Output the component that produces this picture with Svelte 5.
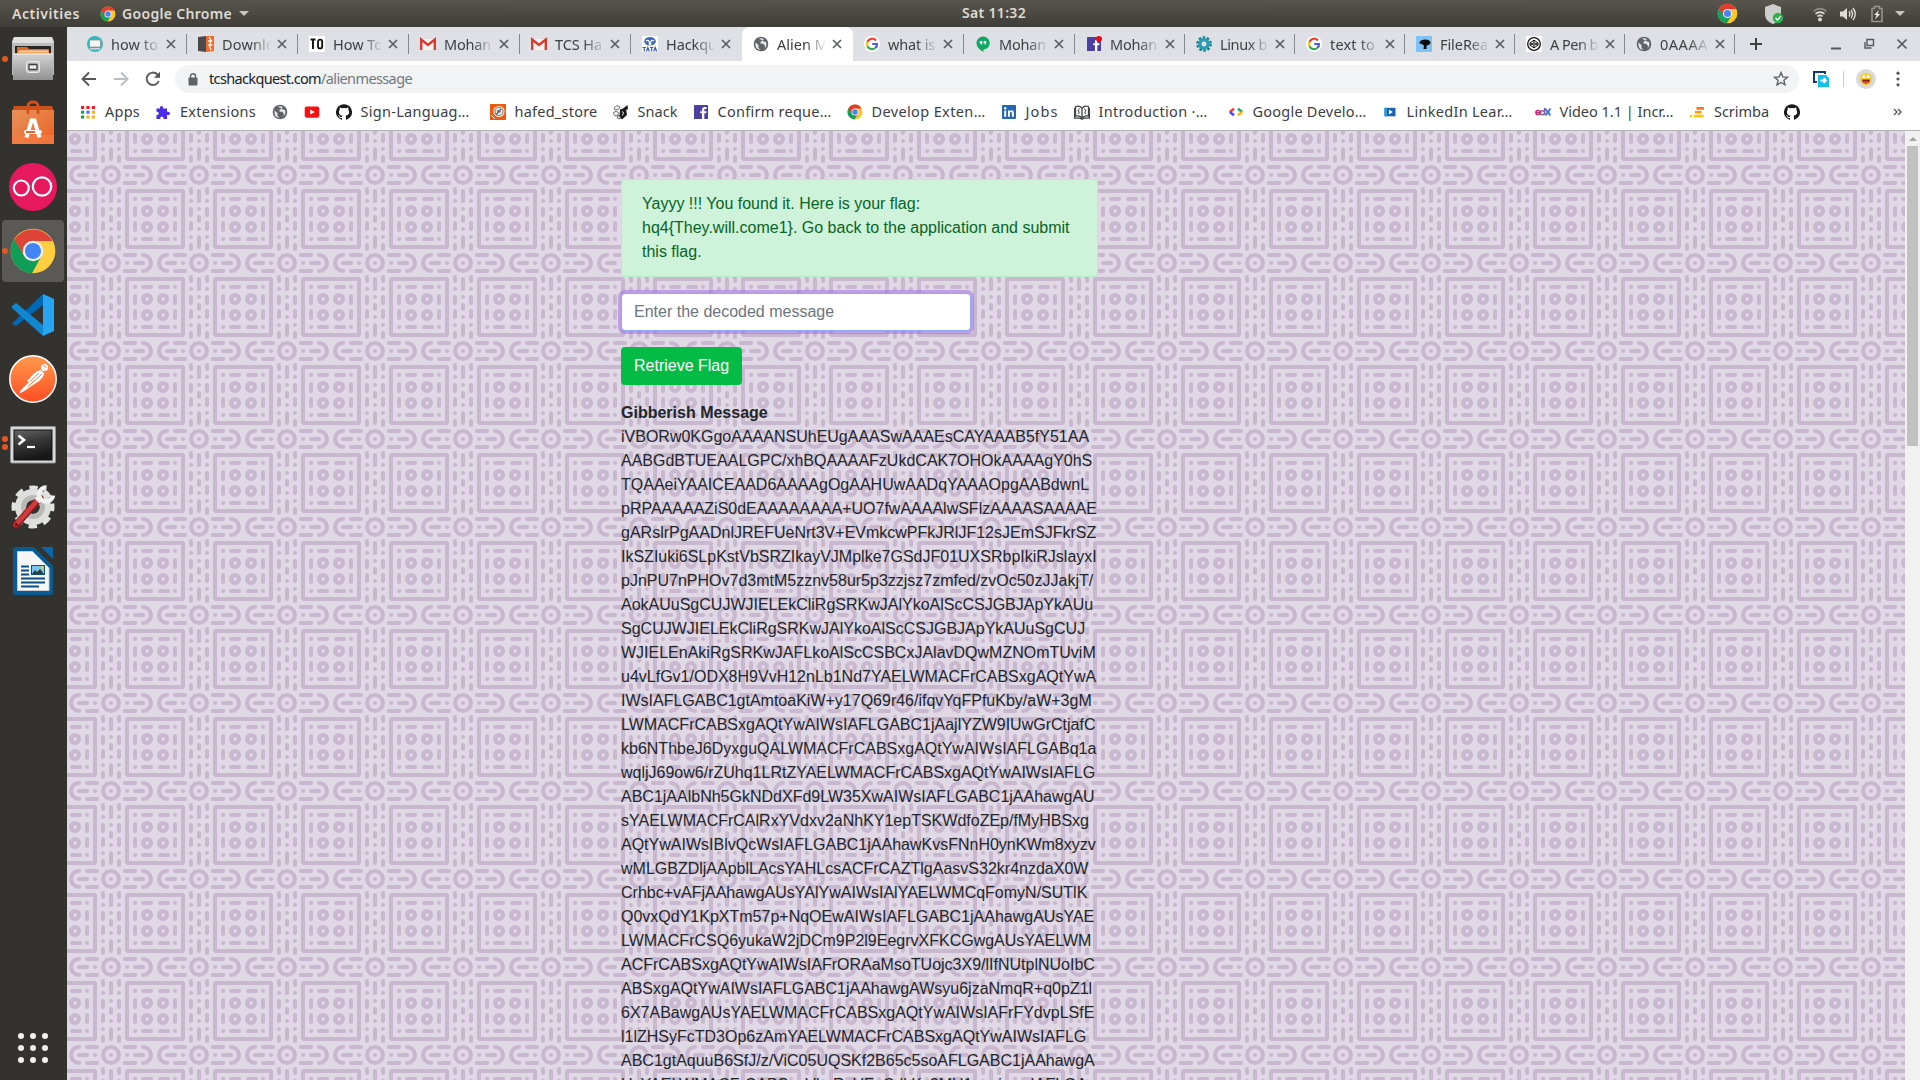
<script>
  const tabs = [
    { icon: 'screen', text: 'how to', w: 47 },
    { icon: 'burp', text: 'Downlo', w: 53 },
    { icon: 'to', text: 'How To', w: 50 },
    { icon: 'gmail', text: 'Mohan', w: 47 },
    { icon: 'gmail', text: 'TCS Ha', w: 47 },
    { icon: 'tata', text: 'Hackqu', w: 51 },
    { icon: 'globe', text: 'Alien M', w: 51, active: true },
    { icon: 'google', text: 'what is', w: 47 },
    { icon: 'hangouts', text: 'Mohan', w: 47 },
    { icon: 'fbdot', text: 'Mohan', w: 47 },
    { icon: 'gear', text: 'Linux b', w: 47 },
    { icon: 'google', text: 'text to', w: 45 },
    { icon: 'bird', text: 'FileRea', w: 48 },
    { icon: 'codepen', text: 'A Pen b', w: 48 },
    { icon: 'globe', text: '0AAAA', w: 48 },
  ];

  // slot: distance to the next bookmark, w: label width
  const bookmarks = [
    { icon: 'apps', text: 'Apps', w: 35, slot: 75 },
    { icon: 'puzzle', text: 'Extensions', w: 76, slot: 116.5 },
    { icon: 'globe', text: '', w: 0, slot: 32 },
    { icon: 'youtube', text: '', w: 0, slot: 32 },
    { icon: 'github', text: 'Sign-Languag…', w: 109, slot: 154 },
    { icon: 'hafed', text: 'hafed_store', w: 83, slot: 123 },
    { icon: 'snack', text: 'Snack', w: 40, slot: 80 },
    { icon: 'fb', text: 'Confirm reque…', w: 114, slot: 154 },
    { icon: 'chrome', text: 'Develop Exten…', w: 114, slot: 154 },
    { icon: 'linkedin', text: 'Jobs', w: 33, slot: 73 },
    { icon: 'book', text: 'Introduction ·…', w: 109, slot: 154 },
    { icon: 'gdev', text: 'Google Develo…', w: 114, slot: 154 },
    { icon: 'lil', text: 'LinkedIn Lear…', w: 106, slot: 153 },
    { icon: 'edx', text: 'Video 1.1 | Incr…', w: 114, slot: 154.5 },
    { icon: 'scrimba', text: 'Scrimba', w: 55, slot: 95 },
    { icon: 'github', text: '', w: 0, slot: 30 },
  ];

  const dock = [
    { icon: 'files', dots: 1 },
    { icon: 'software', dots: 0 },
    { icon: 'oo', dots: 0 },
    { icon: 'chrome', dots: 1, active: true },
    { icon: 'vscode', dots: 0 },
    { icon: 'postman', dots: 0 },
    { icon: 'terminal', dots: 2 },
    { icon: 'settings', dots: 0 },
    { icon: 'writer', dots: 0 },
  ];

  const message = [
    'iVBORw0KGgoAAAANSUhEUgAAASwAAAEsCAYAAAB5fY51AA',
    'AABGdBTUEAALGPC/xhBQAAAAFzUkdCAK7OHOkAAAAgY0hS',
    'TQAAeiYAAICEAAD6AAAAgOgAAHUwAADqYAAAOpgAABdwnL',
    'pRPAAAAAZiS0dEAAAAAAAA+UO7fwAAAAlwSFlzAAAASAAAAE',
    'gARslrPgAADnlJREFUeNrt3V+EVmkcwPFkJRlJF12sJEmSJFkrSZ',
    'IkSZIuki6SLpKstVbSRZIkayVJMplke7GSdJF01UXSRbpIkiRJslayxI',
    'pJnPU7nPHOv7d3mtM5zznv58ur5p3zzjsz7zmfed/zvOc50zJJakjT/',
    'AokAUuSgCUJWJIELEkCliRgSRKwJAlYkoAlScCSJGBJApYkAUu',
    'SgCUJWJIELEkCliRgSRKwJAlYkoAlScCSJGBJApYkAUuSgCUJ',
    'WJIELEnAkiRgSRKwJAFLkoAlScCSBCxJAlavDQwMZNOmTUviM',
    'u4vLfGv1/ODX8H9VvH12nLb1Nd7YAELWMACFrCABSxgAQtYwA',
    'IWsIAFLGABC1gtAmtoaKiW+y17Q69r46/ifqvYqFPfuKby/aW+3gM',
    'LWMACFrCABSxgAQtYwAIWsIAFLGABC1jAajlYZW9IUwGrCtjafC',
    'kb6NThbeJ6DyxguQALWMACFrCABSxgAQtYwAIWsIAFLGABq1a',
    'wqljJ69ow6/rZUhq1LRtZYAELWMACFrCABSxgAQtYwAIWsIAFLG',
    'ABC1jAAlbNh5GkNDdXFd9LW35XwAIWsIAFLGABC1jAAhawgAU',
    'sYAELWMACFrCAlRxYVdxv2aNhKY1epTSKWdfoZEp/fMyHBSxg',
    'AQtYwAIWsIBlvQcWsIAFLGABC1jAAhawKvsFNnH0ynKWm8xyzv',
    'wMLGBZDljAApblLAcsYAHLcsACFrCAZTlgAasvS32kr4nzdaX0W',
    'Crhbc+vAFjAAhawgAUsYAlYwAIWsIAlYAELWMCqFomyN/SUTlK',
    'Q0vxQdY1KpXTm57p+NqOEwAIWsIAFLGABC1jAAhawgAUsYAE',
    'LWMACFrCSQ6yukaW2jDCm9P2l9EegrvXFKCGwgAUsYAELWM',
    'ACFrCABSxgAQtYwAIWsIAFrORAaMsoTUojc3X9/lIfNUtplNUoIbC',
    'ABSxgAQtYwAIWsIAFLGABC1jAAhawgAWsyu6jzaNmqR+q0pZ1l',
    '6X7ABawgAUsYAELWMACFrCABSxgAQtYwAIWsIAFrFYdvpLSfE',
    'l1lZHSyFcTD3Op6zAmYAELWMACFrCABSxgAQtYwAIWsIAFLG',
    'ABC1gtAquuB6SfJ/z/ViC05UQSKf2B65c5soAFLGABC1jAAhawgA',
    'UsYAELWMACFrCABSxgVkeRcUFnCdkKs2MU1aavisuwIAFLGA',
  ];

  // Spaces letters so that a label fills the given width.
  function fit(node, width) {
    const natural = node.getBoundingClientRect().width;
    node.style.letterSpacing = `${(width - natural) / node.textContent.length}px`;
  }
</script>

{#snippet icon(name)}
  <svg class="ico" viewBox="0 0 16 16">
    {#if name === 'screen'}
      <circle cx="8" cy="8" r="8" fill="#35b8be" />
      <rect x="2.5" y="4" width="11" height="7" rx="1" fill="#f4f4f4" stroke="#8a8f92" stroke-width=".8" />
      <path d="M3 12h10v1.5H3z" fill="#cfd4d6" />
    {:else if name === 'burp'}
      <path d="M0 1l8-1v16l-8-1z" fill="#4a4a4d" /><path d="M8 0h8v15l-8 1z" fill="#f26a2c" />
      <path d="M11 1l2.5 4H11l2.5 4H11l2 5" fill="none" stroke="#fff" stroke-width="1.3" />
    {:else if name === 'to'}
      <rect width="16" height="16" fill="#fff" />
      <path d="M1.5 3.5h5M4 3.5v9.5" stroke="#111" stroke-width="1.9" /><rect x="9" y="3.6" width="4.2" height="8.8" rx="2" fill="none" stroke="#111" stroke-width="1.8" />
    {:else if name === 'gmail'}
      <path d="M2 3h12v11H2z" fill="#f2f2f2" /><path d="M1.200 14V3.500L8 9l6.800-5.500V14" fill="none" stroke="#d93a30" stroke-width="2.400" />
    {:else if name === 'tata'}
      <rect width="16" height="16" fill="#fff" /><ellipse cx="8" cy="5.300" rx="5.800" ry="4.300" fill="#4168b8" />
      <path d="M4 5c2-1.500 3.500-1 3.500 4M12 5c-2-1.500-3.500-1-3.500 4" fill="none" stroke="#fff" stroke-width="1.200" />
      <path d="M.5 11.500h3.500M2.200 11.500v4M4.300 15.500l1.500-4 1.500 4M8 11.500h3.500M9.700 11.500v4M11.700 15.500l1.500-4 1.500 4" fill="none" stroke="#3a5fb5" stroke-width="1.200" />
    {:else if name === 'globe'}
      <circle cx="8" cy="8" r="7.300" fill="#5f6368" />
      <path d="M2.500 6.500l3 2.500v3l2 1.700c-3 .3-5.500-2-5-7.200zM6 2.500c2-.7 3.500-.3 4.800.5l-1.300 2-2 .4v2L10.500 8l1.700 2.500-1 2c2-1.500 2.800-4 1.800-6.500l-2-.6z" fill="#e4e6e9" />
    {:else if name === 'google'}
      <circle cx="8" cy="8" r="8" fill="#fff" />
      <g fill="none" stroke-width="2.200"><path d="M12 4.500A5 5 0 0 0 3.500 6" stroke="#ea4335" /><path d="M3.500 6a5 5 0 0 0 0 4.200" stroke="#fbbc05" /><path d="M3.500 10.200A5 5 0 0 0 11.300 12" stroke="#34a853" /><path d="M11.300 12A5 5 0 0 0 13 8H8.200" stroke="#4a5cf0" /></g>
    {:else if name === 'hangouts'}
      <path d="M8 .5a6.500 6.500 0 0 1 .5 13v2.300C4.500 14 1.500 11 1.500 7A6.500 6.500 0 0 1 8 .5z" fill="#10a765" />
      <path d="M4.800 5h2.500v2.500L6 9.300V7.500H4.800zM8.700 5h2.500v2.500L9.900 9.300V7.500H8.700z" fill="#fff" />
    {:else if name === 'fb' || name === 'fbdot'}
      <rect x="1" y="1" width="14" height="14" rx=".6" fill="#4b3fa0" />
      <path d="M9 15V9.300H7.300V7.200H9V5.800C9 4 10 3 12 3h1.500v2h-1.200c-.8 0-1 .4-1 1v1.200h2.200l-.3 2.100h-1.900V15z" fill="#fff" />
      {#if name === 'fbdot'}<circle cx="13" cy="3" r="3" fill="#e5101d" />{/if}
    {:else if name === 'gear'}
      <circle cx="8" cy="8" r="6.500" fill="none" stroke="#127c8c" stroke-width="2.600" stroke-dasharray="2.400 1.684" />
      <circle cx="8" cy="8" r="4.200" fill="none" stroke="#2c9cac" stroke-width="3.600" /><circle cx="8" cy="8" r="2.300" fill="#dfe1e6" />
    {:else if name === 'bird'}
      <rect width="16" height="16" fill="#7ec3f4" /><path d="M3 7l2-2.500c4-2 9-1 9.500 2 .3 2-3 2.500-4 3.500v3H7.500L8 9.500 5.500 8z" fill="#0b0d10" />
    {:else if name === 'codepen'}
      <rect width="16" height="16" rx="1" fill="#fff" /><circle cx="8" cy="8" r="6.300" fill="none" stroke="#111" stroke-width="1.300" />
      <path d="M8 4.200L12 6.800v2.500L8 11.800 4 9.300V6.800zM4 6.800l4 2.500 4-2.500M4 9.300l4-2.500 4 2.500M8 4.200v2.600M8 9.300v2.500" fill="none" stroke="#111" stroke-width="1" />
    {:else if name === 'apps'}
      <g><path d="M1 2h3.200v3H1zM6.400 2h3.200v3H6.400zM11.800 2H15v3h-3.200z" fill="#ea1c24" /><path d="M1 6.700h3.200v3H1zM1 11.400h3.200v3H1z" fill="#10a04a" /><path d="M6.400 6.700h3.200v3H6.400z" fill="#4a6cf0" /><path d="M11.800 6.700H15v3h-3.200zM6.400 11.400h3.200v3H6.400zM11.800 11.400H15v3h-3.200z" fill="#f5b417" /></g>
    {:else if name === 'puzzle'}
      <path d="M1.500 4.500H5C4 1 9 1 8 4.500h4v3.300c4-1 4 4.200 0 3.200V15H8.500c.8-3.500-4-3.500-3.200 0H1.500v-4c3 .6 3-3.800 0-3.200z" fill="#4b2be8" />
    {:else if name === 'youtube'}
      <rect x=".7" y="2.400" width="14.600" height="11.400" rx="2.200" fill="#f61010" /><path d="M6.200 5.500v5L10.800 8z" fill="#fff" />
    {:else if name === 'github'}
      <path d="M8 .2a8 8 0 0 0-2.530 15.590c.4.070.55-.170.55-.380v-1.490c-2.010.370-2.530-.490-2.690-.940-.090-.230-.480-.940-.820-1.130-.280-.150-.680-.520-.010-.530.630-.010 1.080.580 1.230.820.720 1.210 1.870.870 2.330.660.070-.520.280-.870.510-1.070-1.780-.200-3.640-.890-3.640-3.950 0-.870.310-1.590.820-2.150-.080-.200-.360-1.020.080-2.120 0 0 .670-.210 2.200.820a7.400 7.400 0 0 1 4 0c1.530-1.040 2.200-.820 2.200-.820.440 1.100.160 1.920.080 2.120.510.560.820 1.270.820 2.150 0 3.070-1.870 3.750-3.650 3.950.290.250.540.730.540 1.480v2.200c0 .210.150.460.550.380A8 8 0 0 0 8 .2z" fill="#17191c" />
    {:else if name === 'hafed'}
      <rect width="16" height="16" fill="#f05a0c" /><circle cx="9" cy="7.500" r="5.600" fill="#eee" /><circle cx="9" cy="7.500" r="4" fill="none" stroke="#888" stroke-width="1.200" />
      <path d="M6 11l5-6M7 6.500L10.500 8" stroke="#666" stroke-width="1.500" /><path d="M1 11l4 4" stroke="#fff" />
    {:else if name === 'snack'}
      <path d="M1 4l3-2.500 3 1.500-1.500 2.500L2 6z" fill="#efefef" stroke="#555" stroke-width=".8" /><path d="M0 9l3-2 2.500 1.500-.5 3-3 .5z" fill="#efefef" stroke="#555" stroke-width=".8" /><path d="M4 14l1-2.500 3 .5-1 3z" fill="#ddd" stroke="#555" stroke-width=".8" />
      <path d="M7 5.500l3-1L14.500 1l.5 4-1.800 1 .8 5-5 4.500-2.500-3z" fill="#1b1b1b" /><path d="M9 7.500l1.500 1-1 3" stroke="#fff" fill="none" stroke-width=".9" />
    {:else if name === 'chrome'}
      <circle cx="8" cy="8" r="7.500" fill="#fbc52d" />
      <path d="M8 8L1.500 4.200A7.500 7.500 0 0 0 7.500 15.500L11 9.800z" fill="#17a05d" /><path d="M1.500 4.200A7.500 7.500 0 0 1 14.600 4.500H8L4.900 9.800z" fill="#e23c2e" />
      <circle cx="8" cy="8" r="3.500" fill="#f4f4f4" /><circle cx="8" cy="8" r="2.700" fill="#4584f0" />
    {:else if name === 'linkedin'}
      <rect x="1" y="1" width="14" height="14" rx="1" fill="#2466b4" /><path d="M3.200 6.400h2v6.300h-2zM7 6.400h1.900v1c1-1.700 4-1.600 4 1.500v3.800h-2V9.500c0-2-2-1.800-2 0v3.200H7z" fill="#fff" /><circle cx="4.200" cy="4.200" r="1.200" fill="#fff" />
    {:else if name === 'book'}
      <path d="M8 4C6 2 3 2 1.500 2.500v9.500C4 11.500 6 12 8 13.500c2-1.500 4-2 6.500-1.500V2.500C13 2 10 2 8 4zv9.500M.6 4v10.200H6l2 1 2-1h5.400V4" fill="none" stroke="#404347" stroke-width="1.300" /><path d="M5.500 4.500L4 7l1.500 1L4 10M10.500 4.500L12 7l-1.500 1L12 10" fill="none" stroke="#404347" />
    {:else if name === 'gdev'}
      <g fill="none" stroke-width="2.600"><path d="M6 4.800L1.800 8" stroke="#ea4335" /><path d="M1.800 8L6 11.200" stroke="#5a45f0" /><path d="M10 4.800L14.200 8" stroke="#1fa85a" /><path d="M14.200 8L10 11.200" stroke="#f7b50c" /></g>
    {:else if name === 'lil'}
      <path d="M2.500 3.800h11v8.500h-11z" fill="#1b62b3" /><path d="M2.500 3.800H5v8.500H2.500z" fill="#2c9be0" /><path d="M7 5.600v5L10.800 8z" fill="#fff" />
    {:else if name === 'scrimba'}
      <path d="M7.500 3H15v2.800H7.500z" fill="#fb7c16" /><path d="M6 6.900h6.500v2.600H6z" fill="#ff9d00" /><path d="M5 10.700h9.500v2.600H5z" fill="#ffc400" /><path d="M.5 10.700h3v2.600h-3z" fill="#ffd21c" />
    {:else if name === 'edx'}
      <circle cx="3" cy="8.500" r="2.100" fill="none" stroke="#c4246f" stroke-width="1.500" /><path d="M1 8.500h4" stroke="#c4246f" />
      <circle cx="7.600" cy="8.700" r="2" fill="none" stroke="#8b5a96" stroke-width="1.500" /><path d="M9.600 4v7" stroke="#8b5a96" stroke-width="1.400" /><path d="M10 4.500l5.500 7M15.500 4.500l-5 7" stroke="#2d6fe0" stroke-width="1.800" />
    {/if}
  </svg>
{/snippet}

{#snippet dockIcon(name)}
  <svg class="dock-svg" viewBox="0 0 48 48">
    {#if name === 'files'}
      <defs><linearGradient id="steel" x2="0" y2="1"><stop stop-color="#d4d4d4" /><stop offset="1" stop-color="#929292" /></linearGradient></defs>
      <path d="M5 2h38l2 4v34H3V6z" fill="#bcbcbc" /><path d="M5 2h38l1.500 6h-41z" fill="#e0e0e0" />
      <path d="M6 11h36v9H6z" fill="#2b2622" /><path d="M8 12h10l2 2h20v7H8z" fill="#d96b25" /><path d="M9 16h31v5H9z" fill="#f6a455" /><path d="M10 16h29" stroke="#fff3df" stroke-width="1" />
      <path d="M4 18.500h40V45H4z" fill="url(#steel)" /><path d="M4 19h40" stroke="#eee" />
      <rect x="17.500" y="26.500" width="13" height="11" rx="2" fill="#c4c4c4" stroke="#ececec" /><rect x="20" y="29.500" width="8" height="5" rx=".6" fill="#eee" stroke="#3c3c3c" stroke-width="1.300" />
    {:else if name === 'software'}
      <defs><linearGradient id="bag" x2="1" y2="1"><stop stop-color="#e6935a" /><stop offset="1" stop-color="#ee6025" /></linearGradient></defs>
      <path d="M5 7h38l2 6H3z" fill="#c9521e" /><path d="M3 11h42v34H3z" fill="url(#bag)" /><path d="M3 36h42v9H3z" fill="#f47d45" opacity=".7" />
      <path d="M19 15V7a4 4 0 0 1 4-4h2a4 4 0 0 1 4 4v8" fill="none" stroke="#d94f1a" stroke-width="2.800" />
      <path d="M17.500 38.500l5-17h3l5 17" fill="none" stroke="#fff" stroke-width="4" /><rect x="15" y="31" width="18" height="4" rx="2" fill="#fff" /><path d="M17 33h9" stroke="#ee6025" stroke-width="2" />
    {:else if name === 'oo'}
      <circle cx="24" cy="24" r="24" fill="#e6195f" /><circle cx="12.300" cy="25" r="7.500" fill="none" stroke="#fff" stroke-width="2.200" /><circle cx="33" cy="23.500" r="9.200" fill="none" stroke="#fff" stroke-width="2.200" />
    {:else if name === 'chrome'}
      <circle cx="24" cy="24" r="22.300" fill="#ffcd40" /><path d="M5.300 12A22.300 22.300 0 0 0 23 46.300L32.500 29 15.500 29z" fill="#109d58" />
      <path d="M5.300 12.500A22.300 22.300 0 0 1 43.500 14H24L15.500 29z" fill="#dd4437" /><path d="M34 24l-11 22 9-17.500z" fill="#d9a72c" opacity=".5" />
      <circle cx="24" cy="24" r="10.200" fill="#f1f1f1" /><circle cx="24" cy="24" r="8" fill="#4285f4" />
    {:else if name === 'vscode'}
      <path d="M3 32.500L34 3v11L7 35z" fill="#0068b5" /><path d="M3 15l4-3L34 34v11L3 17z" fill="#1187d2" /><path d="M34 3l11 5v32l-11 5z" fill="#28a5f2" />
    {:else if name === 'postman'}
      <defs><linearGradient id="pm" x2="0" y2="1"><stop stop-color="#ff9a4d" /><stop offset="1" stop-color="#ff4d24" /></linearGradient></defs>
      <circle cx="24" cy="24" r="23.200" fill="url(#pm)" stroke="#fff" stroke-width="1.500" /><circle cx="35.500" cy="12.500" r="3.600" fill="#fff" />
      <path d="M31.500 15l3.500 3c0 3-2 5.500-5 8L14.500 36.500l-4 2 1-3L20 27l-2-1 6.500-7q3-3 7-4z" fill="#fff" /><path d="M33 19L19 31.500M30 18l-9 8.500" stroke="#ff733b" stroke-width="1" /><path d="M34 10l3.500 2.500" stroke="#ff733b" />
    {:else if name === 'terminal'}
      <defs><linearGradient id="tm" x1="0" x2=".3" y2="1"><stop stop-color="#666" /><stop offset=".45" stop-color="#3a3a3a" /><stop offset="1" stop-color="#171717" /></linearGradient></defs>
      <rect x="1.500" y="7.500" width="45" height="36.500" rx="1.200" fill="#d7d7d7" stroke="#929292" /><rect x="5" y="11" width="38" height="30" fill="url(#tm)" stroke="#111" />
      <path d="M9.500 16.500l5.500 4.500-5.500 4.500" fill="none" stroke="#fff" stroke-width="2.600" /><path d="M18 28h8" stroke="#fff" stroke-width="2.200" />
    {:else if name === 'settings'}
      <circle cx="24" cy="24" r="18.500" fill="none" stroke="#e2e2e0" stroke-width="6" stroke-dasharray="8 6.530" stroke-dashoffset="4" /><circle cx="24" cy="24" r="12.500" fill="none" stroke="#dededc" stroke-width="11" /><circle cx="24" cy="24" r="9.500" fill="none" stroke="#b9b9b7" stroke-width="5" />
      <path d="M7 42L31 15" stroke="#881a1d" stroke-width="7" stroke-linecap="round" /><path d="M7 41.500L27 19" stroke="#d23b3c" stroke-width="4.500" stroke-linecap="round" /><circle cx="7.500" cy="41.500" r="1.500" fill="#4b1012" />
      <path d="M28 18l4-4" stroke="#eee" stroke-width="7" /><path d="M37.500 4.500a7 7 0 1 0 6.500 8" fill="none" stroke="#f1f1f1" stroke-width="4.600" />
    {:else if name === 'writer'}
      <path d="M7 0h18l19 19v26a3 3 0 0 1-3 3H7a3 3 0 0 1-3-3V3a3 3 0 0 1 3-3z" fill="#0c5a92" /><path d="M32 0h12v12z" fill="#0a66a8" />
      <path d="M8.500 4.500H23.500L40 21v22.500H8.500z" fill="#f6f6f4" stroke="#c6cbd0" />
      <path d="M12 19.500h8M12 23.500h8M12 27.500h8M12 31.500h24M12 35.500h24M12 39.500h18" stroke="#0c4f81" stroke-width="2" /><rect x="22.500" y="18.500" width="13" height="9" fill="#7cc5ec" stroke="#0c4f81" /><path d="M23 27l3-4 2 2 3-3 4 5z" fill="#2f3d43" /><circle cx="33.500" cy="20.500" r="1.400" fill="#e8cf3f" />
    {/if}
  </svg>
{/snippet}

<div class="screen">
  <header class="panel">
    <div class="panel-left">
      <span class="label" use:fit={68}>Activities</span>
      <span class="app">{@render icon('chrome')}<span class="label" use:fit={110}>Google Chrome</span><i class="caret"></i></span>
    </div>
    <span class="label clock" use:fit={64}>Sat 11:32</span>
    <div class="panel-right">
      <span class="tray-chrome">{@render icon('chrome')}</span>
      <svg class="shield" width="20" height="22" viewBox="0 0 20 22"><path d="M9 1l8 3v7c0 5-3 8-8 10C4 19 1 16 1 11V4z" fill="#cdcfcd" /><circle cx="14" cy="15" r="5.200" fill="#2fae4c" /><path d="M11.500 15l2 2 3.200-3.800" fill="none" stroke="#fff" stroke-width="1.300" /></svg>
      <svg class="wifi" width="16" height="16" viewBox="0 0 16 16" fill="none" stroke-width="1.700"><path d="M1.500 5.500a9 9 0 0 1 13 0" stroke="#8d8b85" /><path d="M3.500 8a6.300 6.300 0 0 1 9 0M5.500 10.500a3.500 3.500 0 0 1 5 0" stroke="#dedcd7" /><circle cx="8" cy="13.500" r="1.900" fill="#dedcd7" /></svg>
      <svg class="vol" width="16" height="16" viewBox="0 0 16 16"><path d="M0 5.500h3L7 2v12l-4-3.500H0z" fill="#dedcd7" /><path d="M9 5.500q1.700 2.500 0 5M11 3.800q3 4.200 0 8.400M13 2q4.500 6 0 12" fill="none" stroke="#dedcd7" stroke-width="1.400" /></svg>
      <svg class="batt" width="12" height="18" viewBox="0 0 12 18"><path d="M1 3.500h2.500V1.500h5v2H11v13H1z" fill="none" stroke="#96948e" stroke-width="1.600" /><path d="M8 5l-5 5h2.500L4 14.500l5.200-5.500H6.700z" fill="#eceae5" /></svg>
      <i class="caret"></i>
    </div>
  </header>

  <div class="desk">
    <nav class="dock">
      {#each dock as d}
        <div class="slot" class:active={d.active}>
          <div class="dots">{#each Array(d.dots) as _}<i></i>{/each}</div>
          {@render dockIcon(d.icon)}
        </div>
      {/each}
      <div class="grid9">{#each Array(9) as _}<i></i>{/each}</div>
    </nav>

    <main class="browser">
      <div class="tabstrip">
        {#each tabs as t, i}
          <div class="tab" class:narrow={i > 8} class:active={t.active} class:plain={t.active || tabs[i + 1]?.active}>
            {@render icon(t.icon)}
            <span class="title"><span class="txt" use:fit={t.w}>{t.text}</span></span>
            <svg class="close" width="10" height="10" viewBox="0 0 10 10"><path d="M1 1l8 8M9 1L1 9" stroke="#5a5d62" stroke-width="1.700" /></svg>
          </div>
        {/each}
        <svg class="plus" width="14" height="14" viewBox="0 0 14 14"><path d="M7 1v12M1 7h12" stroke="#3c4043" stroke-width="2" /></svg>
        <div class="winctl">
          <svg width="12" height="12" viewBox="0 0 12 12"><path d="M1 10.500h10" stroke="#55585d" stroke-width="2" /></svg>
          <svg width="12" height="12" viewBox="0 0 12 12" fill="none" stroke="#55585d" stroke-width="1.400"><path d="M4 1.500h6.500v6H4zM2 4v6h6.500" /></svg>
          <svg width="12" height="12" viewBox="0 0 12 12"><path d="M1.500 1.500l9 9M10.500 1.500l-9 9" stroke="#55585d" stroke-width="1.700" /></svg>
        </div>
      </div>

      <div class="toolbar">
        <svg class="nav" viewBox="0 0 16 16"><path d="M15 8H2M8 1.500L1.500 8 8 14.500" fill="none" stroke="#54575c" stroke-width="1.900" /></svg>
        <svg class="nav" viewBox="0 0 16 16"><path d="M1 8h13M8 1.500L14.500 8 8 14.500" fill="none" stroke="#babcbf" stroke-width="1.900" /></svg>
        <svg class="nav" viewBox="0 0 16 16"><path d="M13.700 10A6.200 6.200 0 1 1 12.500 3.600L14 5.500" fill="none" stroke="#54575c" stroke-width="1.900" /><path d="M15 .8v6H9z" fill="#54575c" /></svg>
        <div class="omnibox">
          <svg width="10" height="13" viewBox="0 0 10 13"><rect x=".5" y="4.500" width="9" height="8" rx="1" fill="#5f6368" /><path d="M2.500 5V3.200a2.500 2.500 0 0 1 5 0V5" fill="none" stroke="#5f6368" stroke-width="1.400" /></svg>
          <span class="url"><span class="txt host" use:fit={112}>tcshackquest.com</span><span class="txt path" use:fit={91}>/alienmessage</span></span>
          <svg class="star" width="16" height="16" viewBox="0 0 16 16"><path d="M8 1.600l1.800 4.300 4.700.4-3.600 3 1.100 4.600L8 11.500l-4 2.400 1.100-4.600-3.600-3 4.700-.4z" fill="none" stroke="#5f6368" stroke-width="1.400" /></svg>
        </div>
        <svg class="ext" width="16" height="16" viewBox="0 0 16 16"><path d="M12 3V1H1v10h3" fill="none" stroke="#123a72" stroke-width="2" /><path d="M5 4h8l3 3v9H5z" fill="#0fc0e8" /><path d="M7.500 9.500h5M10.500 7l2.500 2.500-2.500 2.500" fill="none" stroke="#fff" stroke-width="1.800" /></svg>
        <i class="rule"></i>
        <svg class="avatar" width="20" height="20" viewBox="0 0 20 20"><circle cx="10" cy="10" r="10" fill="#d9dadd" /><circle cx="10" cy="10" r="6.200" fill="#f6cd36" /><circle cx="7.800" cy="7.800" r="1.500" fill="#fff" /><circle cx="12.200" cy="7.800" r="1.500" fill="#fff" /><path d="M6 10.500h8c0 5.500-8 5.500-8 0z" fill="#8e1e16" /><path d="M8 13.500q2-1 4 0" stroke="#ef5545" stroke-width="1.500" fill="none" /></svg>
        <svg class="more" width="4" height="16" viewBox="0 0 4 16" fill="#54575c"><circle cx="2" cy="2.200" r="1.600" /><circle cx="2" cy="8" r="1.600" /><circle cx="2" cy="13.800" r="1.600" /></svg>
      </div>

      <div class="bookmarks">
        {#each bookmarks as b}
          <div class="bm" style:width="{b.slot}px">
            {@render icon(b.icon)}
            {#if b.text}<span class="txt" use:fit={b.w}>{b.text}</span>{/if}
          </div>
        {/each}
        <svg class="chev" width="9" height="8" viewBox="0 0 9 8"><path d="M1 1l3 3-3 3M5 1l3 3-3 3" fill="none" stroke="#54575c" stroke-width="1.400" /></svg>
      </div>

      <div class="viewport">
        <svg class="pattern" width="1838" height="949">
          <defs>
            <pattern id="aztec" width="88" height="88" patternUnits="userSpaceOnUse">
              <g fill="none" stroke="#c8b7cf" stroke-width="4" stroke-linecap="round">
                <rect x="-28" y="-28" width="56" height="56" rx="1" />
                <rect x="60" y="-28" width="56" height="56" rx="1" />
                <rect x="-28" y="60" width="56" height="56" rx="1" />
                <rect x="60" y="60" width="56" height="56" rx="1" />
                {#each [8, 80] as cx}{#each [8, 80] as cy}<circle {cx} {cy} r="4" />{/each}{/each}
                {#each [20, 68] as p}
                  <path d="M{p} 4V11M{p} 77V84M76 {p}H84M5 {p}H13" />
                  <path d="M20 {p}h.01M68 {p}h.01" />
                {/each}
                <path d="M44 60V70M44 78v.01M44 86V90M44 -2V2M44 10v.01M44 18V28" />
                {#each [36, 52] as x}
                  <path d="M{x} 58V62M{x} 70v.01M{x} 78V84M{x} 4V10M{x} 18v.01M{x} 26V30" />
                {/each}
                <circle cx="44" cy="44" r="8" /><path d="M44 44h.01M60 44h.01M28 44h.01M68 44h8M12 44h8" />
                <path d="M58 36h10M58 52h10M20 36h10M20 52h10M76 36a8 8 0 0 1 0 16M12 36a8 8 0 0 0 0 16" />
              </g>
            </pattern>
          </defs>
          <rect width="1838" height="949" fill="#e0d8e5" />
          <rect width="1838" height="949" fill="url(#aztec)" />
        </svg>
        <section class="content">
          <div class="alert">Yayyy !!! You found it. Here is your flag: hq4&#123;They.will.come1&#125;. Go back to the application and submit this flag.</div>
          <input class="field" placeholder="Enter the decoded message" />
          <button class="btn">Retrieve Flag</button>
          <div class="msg"><b>Gibberish Message</b>{#each message as line}<span>{line}</span>{/each}</div>
        </section>
        <div class="scroll"><i class="up"></i><div class="thumb"></div></div>
      </div>
    </main>
  </div>
</div>

<style>
  :global(body) { margin: 0; overflow: hidden; }
  .screen { width: 1920px; height: 1080px; display: flex; flex-direction: column; overflow: hidden; font-family: 'Noto Sans', 'Open Sans', sans-serif; }
  svg { display: block; flex: none; }
  .ico { width: 16px; height: 16px; }
  .panel { height: 27px; flex: none; display: grid; grid-template-columns: 1fr auto 1fr; align-items: center; background: linear-gradient(#58554d, #3f3d38); color: #dfdbd2; font-size: 14px; font-weight: 600; }
  .label { white-space: nowrap; line-height: 26px; }
  .panel-left, .panel-right, .app { display: flex; align-items: center; }
  .panel-left { padding-left: 12px; gap: 20px; }
  .app .label { margin-left: 6px; }
  .caret { width: 0; height: 0; border: 5px solid transparent; border-top-color: #c8c5be; border-bottom: 0; margin-left: 7px; }
  .clock { position: relative; left: 34px; top: -1px; }
  .panel-right { justify-content: flex-end; padding-right: 15px; }
  .tray-chrome .ico { width: 21px; height: 21px; }
  .tray-chrome { margin-right: 26px; }
  .shield { margin-right: 28px; }
  .wifi { margin-right: 12px; }
  .vol { margin-right: 15px; }
  .batt { margin-right: 5px; }

  .desk { flex: 1; display: flex; min-height: 0; }
  .dock { width: 67px; flex: none; background: #34322e; display: flex; flex-direction: column; }
  .slot { height: 62px; width: 62px; margin: 1px 3px 1px 2px; border-radius: 4px; display: flex; align-items: center; }
  .slot.active { background: #5b5955; }
  .dots { width: 7px; display: flex; flex-direction: column; gap: 2px; }
  .dots i { width: 6px; height: 6px; border-radius: 50%; background: #e95420; }
  .dock-svg { width: 48px; height: 48px; }
  .grid9 { margin: auto 0 17px 18px; display: grid; grid-template-columns: repeat(3, 6px); gap: 6px; }
  .grid9 i { width: 6px; height: 6px; border-radius: 50%; background: #f2f1f0; }

  .browser { flex: 1; display: flex; flex-direction: column; min-width: 0; background: #fff; }
  .tabstrip { height: 34px; flex: none; background: #dee0e6; display: flex; align-items: center; padding-left: 9px; }
  .tab { width: 111px; height: 34px; flex: none; box-sizing: border-box; display: flex; align-items: center; padding-left: 11px; position: relative; }
  .tab.narrow { width: 110px; }
  .tab::after { content: ''; position: absolute; right: 0; top: 7px; width: 1px; height: 20px; background: #85888e; }
  .tab.plain::after { display: none; }
  .tab.active { background: #fff; border-radius: 8px 8px 0 0; }
  .title { width: 48px; margin-left: 8px; overflow: hidden; white-space: nowrap; mask-image: linear-gradient(90deg, #000 60%, rgba(0, 0, 0, .1)); }
  .txt { font-size: 14.5px; color: #3c4043; white-space: nowrap; display: inline-block; line-height: 20px; padding-bottom: 2px; }
  .close { margin-left: 7px; }
  .plus { margin-left: 14px; }
  .winctl { margin-left: auto; display: flex; gap: 21px; padding-right: 12px; }

  .toolbar { height: 36px; flex: none; display: flex; align-items: center; padding-left: 14px; }
  .nav { width: 16px; height: 16px; margin-right: 16px; }
  .omnibox { height: 28px; width: 1624px; box-sizing: border-box; border-radius: 14px; background: #f1f3f4; margin-left: -2px; display: flex; align-items: center; padding: 0 10px 0 13px; }
  .url { margin-left: 11px; display: flex; }
  .host { color: #202124; }
  .path { color: #74777b; }
  .star { margin-left: auto; }
  .ext { margin-left: 14px; }
  .rule { width: 1px; height: 16px; background: #c8cacd; margin: 0 12px 0 14px; }
  .more { margin-left: 20px; }

  .bookmarks { height: 30px; flex: none; display: flex; align-items: center; padding: 0 18px 3px 13px; border-bottom: 1px solid #b5b2b8; }
  .bm { flex: none; display: flex; align-items: center; gap: 9px; }
  .chev { margin-left: auto; }

  .viewport { flex: 1; position: relative; display: flex; overflow: hidden; min-height: 0; }
  .pattern { position: absolute; left: 0; top: 0; }
  .content { position: relative; width: 477px; margin: 48px 0 0 554px; font: 16px/24px 'Liberation Sans', Arial, sans-serif; color: #212529; }
  .alert { box-sizing: border-box; padding: 12px 20px; border: 1px solid #b8edc9; border-radius: 4px; background: #cef2da; color: #0a6426; margin-bottom: 16px; }
  .field { display: block; box-sizing: border-box; width: 350px; height: 38px; padding: 6px 12px; border: 1px solid #8fa5f8; border-radius: 4px; background: #fff; font: inherit; outline: 0; box-shadow: 0 0 0 3px rgba(153, 102, 230, .5); margin-bottom: 16px; }
  .field::placeholder { color: #6c757d; opacity: 1; }
  .btn { display: block; height: 38px; padding: 6px 13px; border: 0; border-radius: 4px; background: #04bc45; color: #fff; font: inherit; margin-bottom: 16px; }
  .msg b, .msg span { display: block; white-space: nowrap; }
  .scroll { position: relative; margin-left: auto; width: 15px; background: #f1f1f1; display: flex; flex-direction: column; align-items: center; }
  .up { border: 4px solid transparent; border-bottom-color: #a3a3a3; border-top: 0; margin: 6px 0 5px; }
  .thumb { width: 11px; height: 300px; background: #c1c1c1; }
</style>
